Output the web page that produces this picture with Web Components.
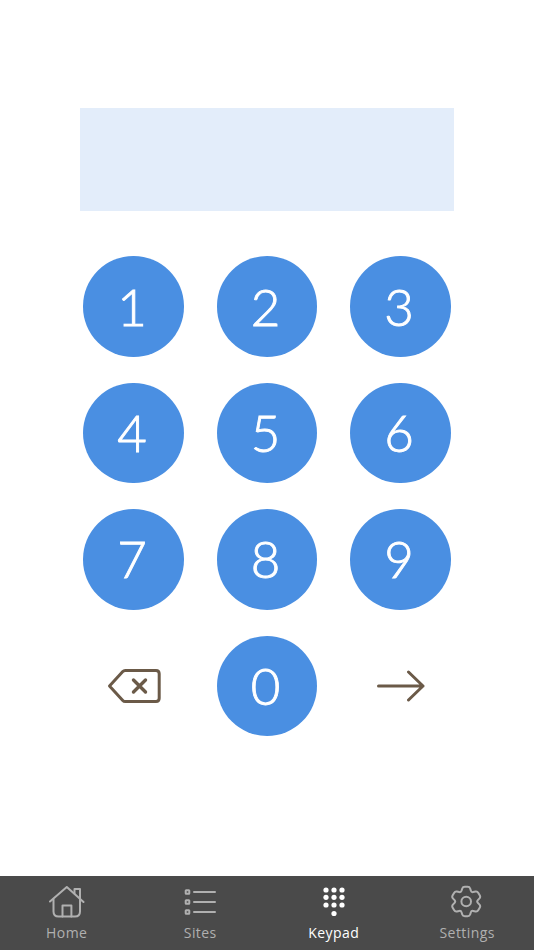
<!DOCTYPE html>
<html>
<head>
<meta charset="utf-8">
<title>Keypad</title>
<style>
  html, body { margin: 0; height: 100%; background: #fff; }
  body { font-family: "Lato", sans-serif; }
</style>
</head>
<body>
<keypad-app>
  <pin-display></pin-display>
  <key-pad></key-pad>
  <tab-bar slot="tabs"></tab-bar>
</keypad-app>

<script>
class KeypadApp extends HTMLElement {
    connectedCallback() {
        this.attachShadow({ mode: 'open' });
        this.shadowRoot.innerHTML = `
            <style>
                :host {
                    display: flex;
                    flex-direction: column;
                    width: 534px;
                    height: 950px;
                    overflow: hidden;
                }
                main {
                    flex: 1;
                    padding-top: 108px;
                }
            </style>
            <main><slot></slot></main>
            <slot name="tabs"></slot>
        `;
    }
}

class PinDisplay extends HTMLElement {
    connectedCallback() {
        this.attachShadow({ mode: 'open' });
        this.shadowRoot.innerHTML = `
            <style>
                :host {
                    display: block;
                    width: 374px;
                    height: 103px;
                    margin: 0 auto 45.4px 80px;
                    background: #e3edfa;
                }
            </style>
        `;
    }
}

class KeyButton extends HTMLElement {
    connectedCallback() {
        this.attachShadow({ mode: 'open' });
        this.shadowRoot.innerHTML = `
            <style>
                :host {
                    display: flex;
                    align-items: center;
                    justify-content: center;
                    width: 100.5px;
                    height: 100.5px;
                    border-radius: 50%;
                    background: #4a8fe2;
                    color: #fff;
                    font: 300 51px/1 "Lato", sans-serif;
                    -webkit-text-stroke: 0.9px #fff;
                }
                span { position: relative; top: -0.5px; left: -1.5px; }
            </style>
            <span><slot></slot></span>
        `;
    }
}

class KeyPad extends HTMLElement {
    connectedCallback() {
        this.attachShadow({ mode: 'open' });
        const digits = ['1', '2', '3', '4', '5', '6', '7', '8', '9'];
        this.shadowRoot.innerHTML = `
            <style>
                :host {
                    display: grid;
                    grid-template-columns: repeat(3, 100.5px);
                    grid-auto-rows: 100.5px;
                    column-gap: 33px;
                    row-gap: 25.9px;
                    margin-left: 83.25px;
                }
                .action {
                    display: flex;
                    align-items: center;
                    justify-content: center;
                }
            </style>
            ${digits.map(d => `<key-button>${d}</key-button>`).join('')}
            <div class="action">
                <svg width="54" height="36" viewBox="0 0 54 36" fill="none" stroke="#6b5a48" stroke-width="3" stroke-linecap="round" stroke-linejoin="round">
                    <path d="M2.5 18 L15.8 3.6 Q16.8 2.5 18.2 2.5 L49 2.5 Q52.2 2.5 52.2 5.7 L52.2 30.3 Q52.2 33.5 49 33.5 L18.2 33.5 Q16.8 33.5 15.8 32.4 Z"/>
                    <path d="M26.5 12 L38.5 24 M38.5 12 L26.5 24" stroke-width="3.4"/>
                </svg>
            </div>
            <key-button>0</key-button>
            <div class="action">
                <svg width="48" height="32" viewBox="0 0 48 32" fill="none" stroke="#6b5a48" stroke-width="3" stroke-linecap="round" stroke-linejoin="round">
                    <path d="M1.5 16 L46 16 M31.5 2 L46 16 L31.5 30"/>
                </svg>
            </div>
        `;
    }
}

// six flat-topped lobes with deep valleys, each corner rounded with a short curve
function gearPath() {
    const pts = [];
    for (let k = 0; k < 6; k++) {
        const a = -90 + 60 * k;
        [[a - 13, 15.2], [a + 13, 15.2], [a + 30, 10.4]].forEach(([deg, r]) => {
            const t = deg * Math.PI / 180;
            pts.push([16 + r * Math.cos(t), 16 + r * Math.sin(t)]);
        });
    }
    const along = (p, q, s) => [p[0] + (q[0] - p[0]) * s, p[1] + (q[1] - p[1]) * s];
    const f = p => p[0].toFixed(2) + ' ' + p[1].toFixed(2);
    const n = pts.length;
    let d = 'M' + f(along(pts[0], pts[n - 1], 0.3));
    pts.forEach((p, i) => {
        const next = pts[(i + 1) % n];
        d += ' Q' + f(p) + ' ' + f(along(p, next, 0.3));
        d += ' L' + f(along(next, p, 0.3));
    });
    return d + ' Z';
}

const TAB_ICONS = {
    home: `<svg width="36" height="32" viewBox="0 0 36 32" fill="none" stroke="currentColor" stroke-width="2" stroke-linecap="round" stroke-linejoin="round">
            <path d="M1 15.5 L17.8 1 L34.5 16"/>
            <path d="M25.5 7.5 L25.5 3 L31 3 L31 13"/>
            <path d="M4.5 13.5 L4.5 25.5 Q4.5 30.5 9.5 30.5 L26 30.5 Q31 30.5 31 25.5 L31 13"/>
            <path d="M13.5 30.5 L13.5 19.5 L22.4 19.5 L22.4 30.5"/>
        </svg>`,
    sites: `<svg width="32" height="28" viewBox="0 0 32 28" fill="none" stroke="currentColor" stroke-linecap="round">
            <rect x="1.7" y="2.2" width="3.6" height="3.6" rx="0.5" stroke-width="2"/>
            <rect x="1.7" y="12.2" width="3.6" height="3.6" rx="0.5" stroke-width="2"/>
            <rect x="1.7" y="22.2" width="3.6" height="3.6" rx="0.5" stroke-width="2"/>
            <path d="M10 4 L31 4 M10 14 L31 14 M10 24 L31 24" stroke-width="2"/>
        </svg>`,
    keypad: `<svg width="24" height="32" viewBox="0 0 24 32" fill="currentColor">
            <circle cx="4" cy="4" r="2.6"/><circle cx="12" cy="4" r="2.6"/><circle cx="20" cy="4" r="2.6"/>
            <circle cx="4" cy="11.3" r="2.6"/><circle cx="12" cy="11.3" r="2.6"/><circle cx="20" cy="11.3" r="2.6"/>
            <circle cx="4" cy="19" r="2.6"/><circle cx="12" cy="19" r="2.6"/><circle cx="20" cy="19" r="2.6"/>
            <circle cx="12" cy="27.5" r="2.6"/>
        </svg>`,
    settings: `<svg width="32" height="33" viewBox="0.8 -0.5 32 33" fill="none" stroke="currentColor" stroke-width="2" stroke-linejoin="round">
            <circle cx="16" cy="16" r="4.8"/>
            <path d="${gearPath()}"/>
        </svg>`
};

class TabItem extends HTMLElement {
    connectedCallback() {
        this.attachShadow({ mode: 'open' });
        const active = this.hasAttribute('active');
        this.shadowRoot.innerHTML = `
            <style>
                :host {
                    display: flex;
                    flex-direction: column;
                    align-items: center;
                    color: ${active ? '#fff' : '#b0b0b0'};
                }
                .icon {
                    height: 34px;
                    margin-top: 8.5px;
                    display: flex;
                    align-items: center;
                    justify-content: center;
                }
                .label {
                    margin-top: 5.5px;
                    font: 400 14px/18px "Open Sans", sans-serif;
                    letter-spacing: 0.45px;
                }
            </style>
            <div class="icon">${TAB_ICONS[this.getAttribute('icon')]}</div>
            <div class="label"><slot></slot></div>
        `;
    }
}

class TabBar extends HTMLElement {
    connectedCallback() {
        this.attachShadow({ mode: 'open' });
        this.shadowRoot.innerHTML = `
            <style>
                :host {
                    display: grid;
                    grid-template-columns: repeat(4, 1fr);
                    height: 74px;
                    background: #4a4a4a;
                }
            </style>
            <tab-item icon="home">Home</tab-item>
            <tab-item icon="sites">Sites</tab-item>
            <tab-item icon="keypad" active>Keypad</tab-item>
            <tab-item icon="settings">Settings</tab-item>
        `;
    }
}

customElements.define('key-button', KeyButton);
customElements.define('pin-display', PinDisplay);
customElements.define('key-pad', KeyPad);
customElements.define('tab-item', TabItem);
customElements.define('tab-bar', TabBar);
customElements.define('keypad-app', KeypadApp);
</script>
</body>
</html>
